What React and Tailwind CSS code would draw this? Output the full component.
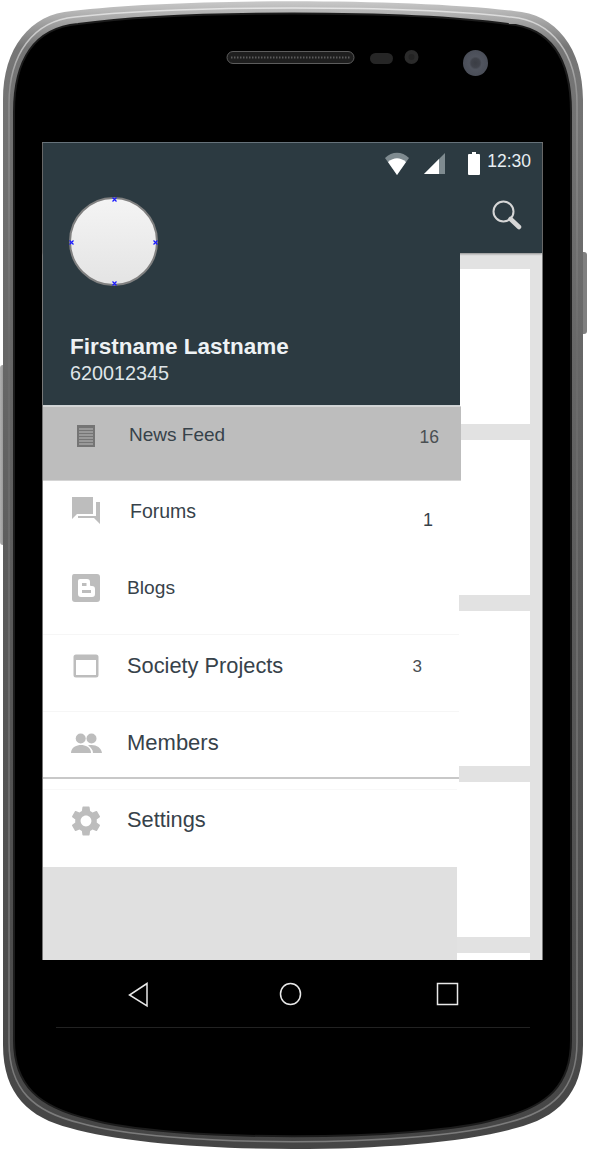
import React from "react";

function PhoneBody() {
  return (
    <svg className="absolute left-0 top-0" width="592" height="1156" viewBox="0 0 592 1156">
      <defs>
        <linearGradient id="rim" x1="0" y1="0" x2="0" y2="1">
          <stop offset="0" stopColor="#c8c8c8" />
          <stop offset="0.04" stopColor="#767676" />
          <stop offset="0.5" stopColor="#5c5c5c" />
          <stop offset="1" stopColor="#454545" />
        </linearGradient>
        <linearGradient id="shine" x1="0" y1="0" x2="0" y2="1">
          <stop offset="0" stopColor="#e4e4e4" />
          <stop offset="0.07" stopColor="#949494" />
          <stop offset="0.3" stopColor="#6c6c6c" />
          <stop offset="1" stopColor="#7c7c7c" />
        </linearGradient>
        <linearGradient id="btn" x1="0" y1="0" x2="1" y2="0">
          <stop offset="0" stopColor="#b0b0b0" />
          <stop offset="1" stopColor="#777777" />
        </linearGradient>
        <radialGradient id="lens" cx="0.5" cy="0.5" r="0.5">
          <stop offset="0" stopColor="#3a3d44" />
          <stop offset="0.35" stopColor="#40434b" />
          <stop offset="0.5" stopColor="#50545e" />
          <stop offset="1" stopColor="#4a4e58" />
        </radialGradient>
      </defs>
      <rect x="0" y="365" width="8" height="180" rx="3" fill="url(#btn)" />
      <rect x="578" y="252" width="9" height="82" rx="3" fill="#808080" />
      <path
        d="M3 100 C3 48 30 14 72 11 C180 -2 406 -2 514 11 C556 14 583 48 583 100 L583 1045 C583 1095 556 1118 516 1128 C420 1156 166 1156 70 1128 C30 1118 3 1095 3 1045 Z"
        fill="url(#rim)"
      />
      <path
        d="M9 104 C9 54 33 21 75 17 C180 5 406 5 511 17 C553 21 577 54 577 104 L577 1042 C577 1090 552 1112 506 1123 C420 1148 166 1148 80 1123 C34 1112 9 1090 9 1042 Z"
        fill="none"
        stroke="url(#shine)"
        strokeWidth="1.5"
      />
      <path
        d="M14 112 C14 60 34 28 78 24 C180 10 406 10 508 24 C552 28 571 60 571 112 L571 1040 C571 1085 548 1107 497 1119 C420 1142 166 1142 89 1119 C38 1107 14 1085 14 1040 Z"
        fill="#000"
        stroke="#1c1c1c"
        strokeWidth="2"
      />
      <rect x="227" y="51.5" width="127" height="12" rx="6" fill="#1e1e1e" stroke="#5c5c5c" strokeWidth="1" />
      <line x1="231" y1="57.5" x2="350" y2="57.5" stroke="#5a5a5a" strokeWidth="2" strokeDasharray="1.5 1.5" />
      <rect x="370" y="53" width="23" height="11" rx="5.5" fill="#262626" />
      <circle cx="411.5" cy="57" r="7" fill="#2b2b2b" />
      <circle cx="411.5" cy="57" r="3" fill="#232323" />
      <ellipse cx="475.5" cy="63" rx="12.5" ry="13" fill="url(#lens)" />
      <line x1="56" y1="1027.5" x2="530" y2="1027.5" stroke="#222" strokeWidth="1" />
      <path d="M147 983.5 L147 1006 L129.5 995 Z" fill="none" stroke="#e8e8e8" strokeWidth="1.5" />
      <ellipse cx="290.5" cy="994" rx="10" ry="10.5" fill="none" stroke="#e8e8e8" strokeWidth="1.5" />
      <rect x="437.5" y="983.5" width="20" height="21" fill="none" stroke="#e8e8e8" strokeWidth="1.5" />
    </svg>
  );
}

function NewsIcon() {
  return (
    <svg width="20" height="24" viewBox="0 0 20 24">
      <rect x="1" y="1" width="18" height="22" fill="#757575" />
      {[5, 8, 11, 14, 17, 20].map((y) => (
        <rect key={y} x="3" y={y - 0.5} width="14" height="1" fill="#bdbdbd" />
      ))}
    </svg>
  );
}

function Mark({ className }) {
  return (
    <svg className={`absolute ${className}`} width="5" height="5" viewBox="0 0 5 5">
      <path d="M0.5 0.5 L4.5 4.5 M4.5 0.5 L0.5 4.5" stroke="#1a1aff" strokeWidth="1.2" />
    </svg>
  );
}

export default function App() {
  const grey = "#bdbdbd";
  return (
    <div className="relative w-[592px] h-[1156px] overflow-hidden bg-white font-['Liberation_Sans',Arial,sans-serif]">
      <PhoneBody />

      {/* screen */}
      <div className="absolute left-[42px] top-[142px] w-[501px] h-[818px] bg-[#e2e2e2] flex flex-col border-x border-[#777]">
        {/* background app */}
        <div className="h-[111px] shrink-0 bg-[#2c3a41] flex flex-col items-end shadow-[inset_0_1px_0_#66727a,0_1px_2px_rgba(0,0,0,0.4)] relative z-[1]">
          <div className="h-[37px] flex items-center pr-[11px]">
            <span className="text-[17.5px] leading-[20px] text-[#e7eef3] mt-[1px]">12:30</span>
          </div>
          <svg className="mr-[19px] mt-[20px]" width="32" height="32" viewBox="0 0 32 32">
            <circle cx="12.5" cy="12.5" r="10" fill="none" stroke="#d6d6d6" strokeWidth="2" />
            <path d="M19.5 20 L28 28" stroke="#d6d6d6" strokeWidth="4.5" strokeLinecap="round" />
          </svg>
        </div>
        <div className="flex-1 flex flex-col gap-[16px] pr-[12px] pt-[16px] items-stretch overflow-hidden">
          <div className="h-[155px] shrink-0 bg-white" />
          <div className="h-[155px] shrink-0 bg-white" />
          <div className="h-[155px] shrink-0 bg-white" />
          <div className="h-[155px] shrink-0 bg-white" />
          <div className="h-[155px] shrink-0 bg-white" />
        </div>

        {/* drawer */}
        <div className="absolute left-0 top-0 z-[2] w-[418px] h-[818px] flex flex-col">
          <div className="relative h-[264px] w-[417px] shrink-0 bg-[#2c3a41] pl-[26px] flex flex-col border-b border-[#cfd3d5] shadow-[inset_0_1px_0_#66727a]">
            <div className="mt-[55px] w-[89px] h-[89px] rounded-full border-2 border-[#808080] bg-gradient-to-b from-[#f4f4f4] to-[#e4e4e4] relative">
              <Mark className="left-[41px] top-[-2px]" />
              <Mark className="left-[41px] bottom-[-2px]" />
              <Mark className="left-[-2px] top-[41px]" />
              <Mark className="right-[-2px] top-[41px]" />
            </div>
            <div className="mt-[49px] ml-[1px] text-[22.5px] leading-[24px] font-bold whitespace-nowrap text-[#eef2f4]">Firstname Lastname</div>
            <div className="mt-[3px] ml-[1px] text-[19.8px] leading-[22px] text-[#dfe5e8]">620012345</div>

            <div className="absolute left-[342px] top-[10px] flex items-start">
              <svg width="24" height="24" viewBox="0 0 24 24">
                <path d="M0 6 C7 -1 17 -1 24 6 L12 23 Z" fill="#7f8b90" />
                <path d="M3 10 C9 5 15 5 21 10 L12 23 Z" fill="#ffffff" />
              </svg>
              <svg className="ml-[15px]" width="22" height="22" viewBox="0 0 22 22">
                <path d="M0 22 L21 1 L21 22 Z" fill="#7f8b90" />
                <path d="M0 22 L15 7 L15 22 Z" fill="#ffffff" />
              </svg>
            </div>
          </div>

          <div className="h-[75px] shrink-0 w-[418px] bg-[#bdbdbd] border-y border-[#d5d5d5] flex">
            <div className="ml-[33px] mt-[17px]"><NewsIcon /></div>
            <span className="ml-[33px] mt-[17px] text-[19px] leading-[22px] text-[#37424a]">News Feed</span>
            <span className="ml-auto mr-[22px] mt-[19px] text-[17.5px] leading-[22px] text-[#4a4f52]">16</span>
          </div>

          <div className="h-[76px] shrink-0 w-[416px] bg-white flex">
            <svg className="ml-[28px] mt-[15px]" width="30" height="29" viewBox="0 0 30 29">
              <path d="M1 1 H22 V18 H6 L1 23 Z" fill={grey} />
              <path d="M25 6 H29 V28 L23 22 H7 V20 H25 Z" fill={grey} />
            </svg>
            <span className="ml-[29px] mt-[19px] text-[19.5px] leading-[22px] text-[#37424a]">Forums</span>
            <span className="ml-auto mr-[26px] mt-[28px] text-[18px] leading-[22px] text-[#37424a]">1</span>
          </div>

          <div className="h-[78px] shrink-0 flex bg-white border-b border-[#f6f6f6] w-[416px]">
            <svg className="ml-[28px] mt-[16px]" width="30" height="30" viewBox="0 0 30 30">
              <path
                fillRule="evenodd"
                fill={grey}
                d="M3 1 H26 Q29 1 29 4 V26 Q29 29 26 29 H4 Q1 29 1 26 V4 Q1 1 3 1 Z M9 6 Q7 6 7 8 V21 Q7 24 10 24 H21 Q24 24 24 21 V16 Q24 13 21 13 H20 Q19 13 19 12 V9 Q19 6 16 6 Z M11 10 H15.5 V13 H11 Z M11 17 H20 V20 H11 Z"
              />
            </svg>
            <span className="ml-[26px] mt-[20px] text-[19.2px] leading-[22px] text-[#37424a]">Blogs</span>
          </div>

          <div className="h-[77px] shrink-0 flex bg-white border-b border-[#f6f6f6] w-[416px]">
            <svg className="ml-[30px] mt-[19px]" width="26" height="24" viewBox="0 0 26 24">
              <path
                fillRule="evenodd"
                fill={grey}
                d="M3 0.5 H23 Q25.5 0.5 25.5 3 V21 Q25.5 23.5 23 23.5 H3 Q0.5 23.5 0.5 21 V3 Q0.5 0.5 3 0.5 Z M3 6 V21 H23 V6 Z"
              />
            </svg>
            <span className="ml-[28px] mt-[18px] text-[21.8px] leading-[26px] whitespace-nowrap text-[#37424a]">Society Projects</span>
            <span className="ml-auto mr-[37px] mt-[21px] text-[17px] leading-[22px] text-[#4a4f52]">3</span>
          </div>

          <div className="h-[67px] shrink-0 flex bg-white border-b-2 border-[#c8c8c8] w-[416px]">
            <svg className="ml-[27px] mt-[21px]" width="32" height="20" viewBox="0 0 32 20">
              <circle cx="10.7" cy="5.5" r="5" fill={grey} />
              <circle cx="21.5" cy="5.5" r="5" fill={grey} />
              <path d="M1 20 C1 14 7 12 11 12 C15 12 21 14 21 20 Z" fill={grey} />
              <path d="M18 12.5 C25 11 31 14 32 20 H23 C23 17 21 14.5 18 12.5 Z" fill={grey} />
            </svg>
            <span className="ml-[25px] mt-[18px] text-[22px] leading-[26px] text-[#37424a]">Members</span>
          </div>

          <div className="h-[88px] shrink-0 flex bg-white w-[416px] relative">
            <span className="absolute left-0 right-[2px] top-[10px] h-px bg-[#f8f8f8]" />
            <svg className="ml-[25px] mt-[24px]" width="36" height="36" viewBox="0 0 24 24">
              <path
                fill={grey}
                d="M19.14 12.94c.04-.3.06-.61.06-.94 0-.32-.02-.64-.07-.94l2.03-1.58a.49.49 0 0 0 .12-.61l-1.92-3.32a.488.488 0 0 0-.59-.22l-2.39.96c-.5-.38-1.03-.7-1.62-.94l-.36-2.54a.484.484 0 0 0-.48-.41h-3.84c-.24 0-.43.17-.47.41l-.36 2.54c-.59.24-1.13.57-1.62.94l-2.39-.96c-.22-.08-.47 0-.59.22L2.74 8.87c-.12.21-.08.47.12.61l2.03 1.58c-.05.3-.09.63-.09.94s.02.64.07.94l-2.03 1.58a.49.49 0 0 0-.12.61l1.92 3.32c.12.22.37.29.59.22l2.39-.96c.5.38 1.03.7 1.62.94l.36 2.54c.05.24.24.41.48.41h3.84c.24 0 .44-.17.47-.41l.36-2.54c.59-.24 1.13-.56 1.62-.94l2.39.96c.22.08.47 0 .59-.22l1.92-3.32c.12-.22.07-.47-.12-.61l-2.01-1.58zM12 15.6c-1.98 0-3.6-1.62-3.6-3.6s1.62-3.6 3.6-3.6 3.6 1.62 3.6 3.6-1.62 3.6-3.6 3.6z"
              />
            </svg>
            <span className="ml-[23px] mt-[28px] text-[21.8px] leading-[26px] text-[#37424a]">Settings</span>
          </div>

          <div className="h-[93px] shrink-0 w-[414px] bg-[#e0e0e0]" />
        </div>

        {/* battery sits on app bar */}
        <svg className="absolute left-[425px] top-[10px] z-[3]" width="12" height="23" viewBox="0 0 12 23">
          <path d="M4 0 H8 V2 H11 Q12 2 12 3 V22 Q12 23 11 23 H1 Q0 23 0 22 V3 Q0 2 1 2 H4 Z" fill="#ffffff" />
        </svg>
      </div>
    </div>
  );
}
